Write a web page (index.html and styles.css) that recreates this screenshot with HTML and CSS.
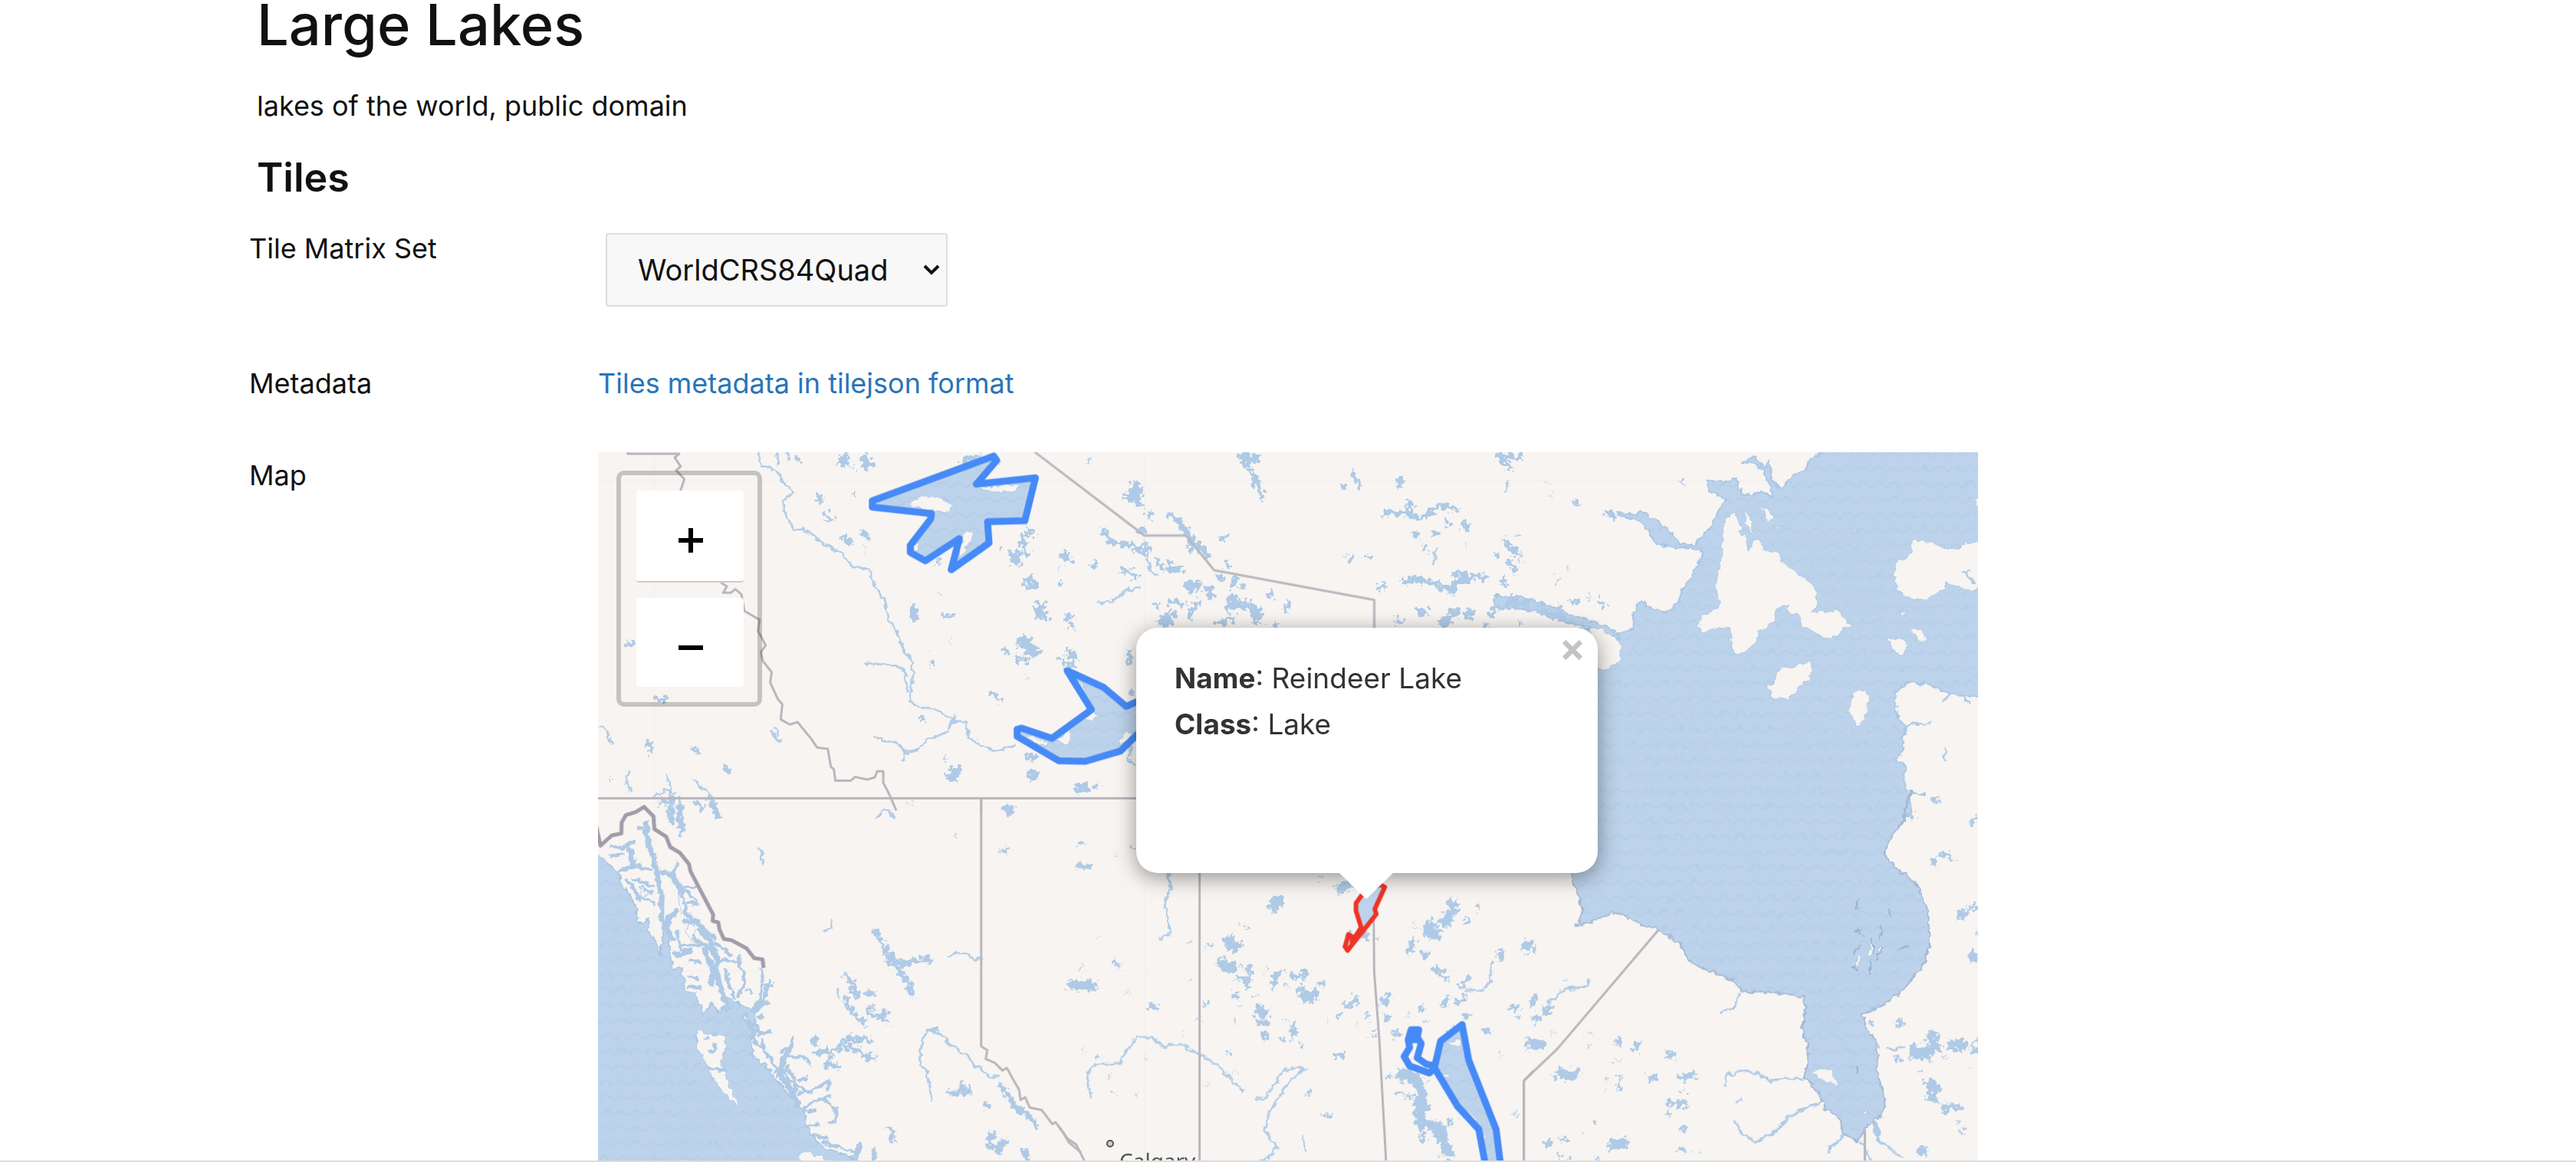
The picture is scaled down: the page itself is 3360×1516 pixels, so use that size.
FILE: index.html
```html
<!DOCTYPE html>
<html lang="en">
<head>
<meta charset="utf-8">
<title>Large Lakes</title>
<link rel="stylesheet" href="styles.css">
</head>
<body>
<main class="page">
  <header class="intro">
    <h1>Large Lakes</h1>
    <p>lakes of the world, public domain</p>
    <h2>Tiles</h2>
  </header>
  <div class="rows">
    <label class="term" for="tms">Tile Matrix Set</label>
    <div class="row-select">
      <div class="select-box">
        <select id="tms"><option>WorldCRS84Quad</option><option>WebMercatorQuad</option></select>
        <svg class="chevron" viewBox="0 0 24 16" aria-hidden="true"><path d="M3 3l9 9 9-9"/></svg>
      </div>
    </div>
    <div class="term">Metadata</div>
    <div class="row-link"><a href="#tilejson">Tiles metadata in tilejson format</a></div>
    <div class="term">Map</div>
    <div class="map">
      <svg class="map-canvas" viewBox="780 590 1800 924" preserveAspectRatio="xMidYMin slice" role="img" aria-label="Map of northern Canada">
        <defs>
          <pattern id="waves" width="20" height="20" patternUnits="userSpaceOnUse" patternTransform="scale(2.529 3)">
            <rect width="20" height="20" fill="#bdd3eb"/>
            <path d="M0 15q3 0 5-3t5-3 5 3 5 3" fill="none" stroke="#b6cee8" stroke-width="2"/>
          </pattern>
          <filter id="rough" filterUnits="userSpaceOnUse" x="770" y="580" width="1820" height="940">
            <feTurbulence type="fractalNoise" baseFrequency=".12" numOctaves="2" seed="4"/>
            <feDisplacementMap in="SourceGraphic" scale="9" xChannelSelector="R" yChannelSelector="G"/>
          </filter>
          <filter id="specks" filterUnits="userSpaceOnUse" x="770" y="580" width="1820" height="940">
            <feTurbulence type="fractalNoise" baseFrequency=".16" numOctaves="2" seed="9"/>
            <feDisplacementMap in="SourceGraphic" scale="18" xChannelSelector="R" yChannelSelector="G"/>
          </filter>
        </defs>
        <rect x="780" y="590" width="1800" height="924" fill="#f7f4f1"/>
        <g class="seams"><path d="M853 590V1514M1493 590V1514M780 627H2580M780 1267H2580"/></g>

        <!-- Hudson Bay and the northern straits -->
        <g filter="url(#rough)">
          <g transform="translate(1980 580) scale(.3954 .3333)">
            <path class="sea" d="M1560-20L1015 20 965 50 950 95 900 130 868 178 835 135 830 60 815 95 775 45 740 70 785 75 815 110 835 170 840 212 800 180 775 200 735 190 720 130 700 145 625 145 630 185 683 215 650 280 645 310 600 370 585 390 535 390 495 330 400 258 385 272 325 268 330 277 400 297 430 335 455 390 540 405 600 410 605 430 590 480 570 520 545 560 530 615 485 660 440 640 405 610 385 650 375 720 335 740 200 720 200 1450H1300L1290 1370 1275 1310 1275 1250 1240 1240 1270 1200 1270 1150 1280 1105 1255 1080 1242 1010 1245 970 1285 930 1340 935 1390 960 1440 975 1480 985 1560 990Z"/>
            <path class="sea" d="M-80 590L0 595 50 608 120 640 180 668 270 700 335 745 335 760 270 730 180 700 60 655 0 642-80 640ZM285 260l20 0 15 30z"/>
            <path class="ground" d="M240 725L270 715 330 765 340 800 335 850 285 885 240 875ZM1560 375L1490 385 1470 385 1460 405 1410 410 1370 385 1300 370 1300 420 1245 465 1242 530 1255 575 1300 605 1340 605 1410 570 1410 540 1500 575 1560 540ZM710 270L685 300 675 340 668 460 652 545 665 640 610 670 592 715 605 742 640 722 700 715 706 815 725 828 760 805 785 770 795 735 845 695 850 640 890 625 895 660 930 665 935 715 1035 760 1095 705 1060 650 1040 640 1040 655 965 655 992 630 975 550 930 510 910 495 870 460 860 430 810 410 785 365 760 415 750 355 725 345 740 330 722 290ZM745 250L770 300 775 345 755 325ZM790 230L845 275 822 305 810 260ZM840 315L875 320 860 325ZM865 865L900 870 950 852 970 860 960 910 910 975 885 998 865 985 845 1000 825 950 850 915ZM1125 960L1145 962 1157 990 1148 1050 1122 1108 1092 1045 1092 1010 1108 975ZM1220 762L1255 758 1283 780 1283 808 1258 828 1240 800ZM1295 722L1330 725 1348 772 1320 760ZM1258 658L1287 655 1268 668ZM1530 200V260L1508 220ZM1500 903L1520 915Z"/>
            <path class="water w3" d="M1490 490l-15 15 20 20 15 20M1400 1002l25-20 15-10M1460 980l35 35M1280 1100l30-10 50 3M1290 1370l50 0M1365 1380l10 20M1410 1190l-2 30 6 20"/>
          </g>
          <g transform="translate(1980 1040) scale(.3954 .3333)">
            <path class="sea coast" d="M170-30L170 270 190 360 212 430 210 460 190 508 240 488 310 452 350 462 400 500 465 518 535 575 565 640 600 665 700 710 740 760 830 762 900 772 943 785 948 830 935 910 955 970 955 1050 942 1095 990 1150 1010 1215 1060 1260 1078 1320 1120 1348 1145 1300 1165 1275 1195 1250 1215 1190 1195 1130 1185 1060 1185 970 1150 900 1135 850 1225 800 1270 755 1330 670 1358 590 1355 480 1335 390 1310 330 1250 280 1212 235 1215 185 1245 135 1270 100 1275 50 1300-30"/>
            <path class="ground" d="M965 1080L1000 1062 1035 1072 1058 1130 1020 1115ZM1165 560l8 20-8 50-8-20zM1125 620l10 5-18 40-5-10zM1190 580l12 20-12 30zM1105 30l6 5-14 15zM1135 1235l20-10-5 20zM1106 1035l5 15-8 5z"/>
            <path class="hair" d="M1120 400v40M1115 510l20 30M1105 610l30-30M1165 550l10 60M1200 590l-20 50M1165 640l-5 55M1120 680l-12-20M1220 430l8 40M1250 600l40-15M1195 500v60M1110 520h30M1115 1050l5 35"/>
            <path class="water w3" d="M735 765l-25 60-45 20M940 1105l-60-5-50 10-40-30-60-10-40 20-8 40M1000 1190l-50 30-60 30-30 50-75 50-40-30-30-50M1075 1325l-30 30-25 35M1190 1290l-5 50 40 30 40 45M1130 1350l35 70M235 710l-5 30-85 15-50 55M1215 988l60-8"/>
            <path class="water w8" d="M1175 1270l15 60"/>
          </g>
        </g>

        <!-- Pacific coast -->
        <g filter="url(#rough)">
          <g transform="translate(780 1040) scale(.3954 .3333)">
            <path class="sea" d="M-30 220L0 230 70 295 75 330 105 380 125 430 130 495 165 480 160 525 190 560 205 620 215 500 235 490 235 600 245 670 275 670 290 760 320 770 350 855 375 800 400 845 430 790 470 810 520 840 515 900 505 960 510 1010 560 1060 620 1150 680 1230 690 1300 740 1370 850 1415 870 1450H-30Z"/>
            <path class="water w8" d="M155 90l10 90 20 60 15 80 10 80 0 90M205 290l40 15 30 70 15 80 50 50 30 60 20 60 5 90 20 60 15 60M100 180l10 60 10 30 30 0M260 440l-40 60 30 60M350 590l30 90-10 60M310 600l-60 20M520 840l30-50M640 970l-30 60-10 60 40 60 20 60M480 850l40 80M860 1360l-10 50"/>
            <path class="water w5" d="M40 190l40 10 40-30M40 230l50-10M130 120l25 10M70 290l60-20 50 20M90 320l30 40 20 50M110 320l30 10 50 20M140 350l40 30M130 380l60 40M245 300l18-45M250 310l30 50 50 50M280 350l50 0M265 330l15 30M290 410l40 10M280 480l60 20 50 60M310 500l10 60 40 20M260 520l10 80M330 520l50 60M270 580h80l40 30M380 570l30 20 30 30M300 640l40 10M350 600l20 60 30 80M380 660l30-20 50 0 20 40 0 60-20 40M460 640l10-20M420 670l10 60 20 60M300 700l30 10M300 740l40 10M540 670l5 80-15 50-20 40M565 710l-10 60-30 70M580 735l-30 0M565 800l-40 30M490 750l20 20M520 870l10 60 40-15M540 850l-10 20M500 930l40 50 40 60 20 50M540 940l10 50M580 1080l60-10M600 1000l40-30 0-30M630 1010l60 15 10 30M600 1040l30 70 30 20M620 1050l30 60 0 60M620 1100l20 60M660 1110l30-10M650 1130l60 30M660 1160l60-20 40-30 5 0M700 1200l60-30M720 1190l50-20M745 1180l40 40 0 50-30 5M690 1230l30 0M690 1290l40-10M710 1320l50 20M740 1350l80 30 40 20M910 1375v50M865 1350l0 50M765 1105l-5 40M680 1230l20-40"/>
            <path class="ground" d="M325 912L370 930 425 935 405 1050 425 1090 430 1130 475 1225 440 1190 385 1110 355 1040 325 970ZM660 1400l40-10 40 20 20 30H680ZM480 860l14-5 2 20zM135 350l30 30-20 10zM270 370l20 60-20 30zM300 490l20 30-10 40-20-30z"/>
            <path class="water w5" d="M350 945l15-5M360 995l25-5 5-25M360 1060l60 10"/>
          </g>
        </g>

        <!-- rivers -->
        <g class="rivers" filter="url(#rough)">
          <g transform="translate(780 580) scale(.3954 .3333)">
            <path d="M525 25l15 55 50 25 30 55 25 25-35 35 5 45 30 65 50 10 50 50 60 35 30 50 60 15 20 70 35 60 5 60 30 50 20 70 30 50 5 70-15 85 35 20 50 10 60 45 45 5 5 55 30 25 60 35 70-25"/>
            <path d="M880 855l60 5 60 15 15 30 5 60M910 1140l40 25 40 0 25 45 40-15 30-40 70-30 10-40 15-25M1020 1210l-15 30"/>
            <path d="M310 1310l50 50 20 40 15 60M225 1290l15 50-5 60M180 1380l40-25 40 10M105 1280l-15 40 20 40M5 1100l25 25 15 50M590 30l5 50M620 30l8 30M270 1380v60M570 1120l30 45M580 1110l15 30"/>
          </g>
          <g transform="translate(1380 580) scale(.3954 .3333)">
            <path d="M130 615l40 5 60-50 40-15M290 400l10 80 30 40M240 1180l-5 60 20 15M1470 190l18-50M1250 400l-12 70"/>
          </g>
          <g transform="translate(780 1040) scale(.3954 .3333)">
            <path d="M920 90l20-40 20 0 20 35M740 525l30-15 5-30M1150 625l30-15 30 5 25 15 35 0M1100 1185l-15-110-25-30 10-100 20-35 40 20 30 35 50 40 40 50 50 45 25-10M790 750l5 35M535 200l8 60"/>
          </g>
          <g transform="translate(1380 1040) scale(.3954 .3333)">
            <path d="M365 295l5 60-20 70 10 50 10 60-40 25M110 1180l-15-100 30-35 75-5 60-100 50 0 30 35 60-10 80 50 50 40 50 60 30 35M650 1180l35 0 30-60 30-55 75-5-50 45-30 50-40 70-20 80 45 65-40 50-70 15M1435 640l-10 80-20 35-60 0M805 1320l15 65"/>
          </g>
        </g>

        <!-- small lakes -->
        <g filter="url(#specks)">
          <g transform="translate(780 580) scale(.3954 .3333)">
            <path class="water w14" d="M810 40l5 45M875 45l25 45M1370 410l10 60M1380 420l-5 50M1415 520l20 50M1455 620l8 60M1470 660l5 20M1390 770l30 20 30 30M1400 750l30 60M1175 1260l5 30-20 20M1420 1290l30 0M1150 660v20M1530 450l20-20"/>
            <path class="water w8" d="M735 200l-5 30M745 260l25 40M840 185l10 0M800 355l40 35M870 335l20 35M878 412h3M1045 625l-10 50 15 10M1125 583h3M1160 770h3M1090 810h3M1100 845l3 25M1410 330l-10 60 20 50M1440 335l-20 20M1330 805l20 0M1380 820l10 30M1410 840v15M1410 915h3M1300 970l30 35M1028 1035h3M1068 1065v20M1145 1223h3M1410 1215l40 15M165 1150l15 60M320 1180l5 35M425 1260l3 25M40 1305h3M190 1000l40-5M95 778l25 5M660 45v20M735 37h2M840 90v3M1520 490h3M1525 550h5M1550 670l3 20M1560 710v10M1530 845l20 30M1325 405l3 5M1110 465l20-5M910 210v20M1200 75l70-30M1330 65h5"/>
          </g>
          <g transform="translate(1380 580) scale(.3954 .3333)">
            <path class="water w14" d="M610 30l20 50M640 40l20 20M255 145l5 90M225 190l30 20M370 670l-30 40M570 590l20 60M650 640l10 60M1480 610l80 20M1260 700l40-20M1300 640l5 30M1200 640l5 30M1340 660l30 10M100 1340l-40 10M420 560l50-10"/>
            <path class="water w8" d="M630 90l30 70 15 50M970 105l25 60M943 150v20M1128 130v40M1450 30l45 70M1460 45l70 5M95 65h15M300 260v30M365 265l50 60 30 50 50 60M430 340l10 80M150 330l20 50 60 10 60 30M260 340l30-10M290 380v60M210 490l50 20-10 25M40 440v20M130 455l-20 20M330 450l20 50M370 450v40l40 0M530 370l30-10M550 460l15 5M600 550l20 10M490 570l20 30M480 560l30 10M550 640l80-10 30 10M520 700l60-20M430 690l20-60 20-20M360 610l60 20M310 628h25M700 575v30M760 615l-10 45M720 700v15M590 520l-20 40M530 500l10 30M950 430v3M960 455l15-5M1018 430v20M1070 265l80 5 40 20 60-40 30-15 40 30M1160 220v50M1280 290l5 30M1340 295l5 50M1240 330v30M1180 340v30M1210 390v30M1345 390h2M1383 420h2M1130 540l50-15 60 20 40 20 50-30 60-20 20 5M1280 570l40 0M1300 510l90 10M1050 565l30-15M1480 370v30l40 30M1450 420l-5 25M1490 440v30l20 30M1470 510v40M1515 350h3M1430 640l5 40M1110 690l30 0M1520 700h3M1400 710l25 0M10 830l15 40M30 800l25 40-15 30M240 800l-8 60M240 960v20M120 1330l15 15M30 660l15 20M40 700v15M0 550h8M380 650l-10 50M600 610l30 0"/>
          </g>
          <g transform="translate(1980 580) scale(.3954 .3333)">
            <path class="water w8" d="M5 45h3M98 145v3M112 200h3M192 220v15M540 140l4 20M165 490h5M130 530h5M230 597h5M260 605l25 30M175 620l20-5M0 350v5M5 430h5M0 455h8M5 700h5M60 640l90 40M130 630l20 50M290 265l25 20"/>
          </g>
          <g transform="translate(780 1040) scale(.3954 .3333)">
            <path class="water w8" d="M1330 45l40 15M1350 30l10 25M1180 158h4M1330 215l20-10M1028 25v3M370 0l28 85M320 20l28 20M200 20l60-10M240 20v80M270 30v60l10 20-10 40M910 515l40 80 30 50 40 80 20 50M945 635l70 15 50-15 40 5M815 695l30 50 10 40M810 780l30 60 30 40 20-5M885 768h35M880 830l30-10M890 850l40 5 25 30M940 840l15 10M800 950l50-5 50 5M725 940l-20 30M715 1000l60-5 30-25 50 20 40 35 20-10M770 1020l-20 30 50 5M1155 1155l30 5 50-10M1190 1150l20-25M1285 1195v25M1325 1120l50 90 40 30 35 50M965 1290l8 60M1305 1310l-20 50 30 20 20-10 0-30M1340 1340l-20 60M1400 1375l20 45M1550 733l15 0M1100 912l20 0"/>
          </g>
          <g transform="translate(1380 1040) scale(.3954 .3333)">
            <path class="water w14" d="M700 410l40 0M700 440l30-30M930 340l10 30M40 735l70 0M110 735l10 15M560 540l10 40 30 10M530 640l40 30 20-20M800 780l60-10M830 770v30M650 830l40 20M1300 400l5 60M1240 480l-20 50 40 10M1270 500l30-40M1120 1080l60 20 20 60-10 60 10 60 50 10 20 60 20 60M1450 620l20 0M1530 580l40 10M1555 960h10M1130 1090l60 20M1260 1290l15 50"/>
            <path class="water w8" d="M70 175l15 5M190 225h3M245 190v10M60 268l50 5M130 550v3M185 640l15 20M75 665h5M228 763h3M300 815l30 10M430 565l3 5M495 570v15M465 600v3M430 720v5M480 810h10M463 865h3M418 925v3M595 495h3M620 510l10 5M630 660l-5 90M590 710l30 0M590 770l-10 15M655 775v10M600 815h3M580 875h5M655 880l45 10M680 915l10 45M780 880l-5 60M755 875v3M740 940v10M800 965l10 10M685 670h5M740 685l-25 10-5 50M770 700h40M820 680l-20 30M865 720v15M755 740v5M800 740v50M890 880h3M925 845v15M985 770l-10 40-30 10M985 893h3M940 800v10M1090 770v20l-30 20M1025 850v20M1070 860l30 10M1155 850v3M1200 820v25M1210 875v5M1020 940v3M1045 910v15M1120 910v20l-20 10M1380 435h8M1345 480v20M1170 500v5M1170 550l-10 60M1210 600v30M1240 660l20 30 30 20M1290 780l-20 40M1360 700l-30 40M1350 790l-40 15M1340 860l20-15M1490 830l30-15M1400 915l30 0M1515 860h5M1560 810h10M1455 1012h5M940 1005l-30 15M885 1245l20 0M870 1240v10M828 1150v15M565 990v20M580 1080h3M487 1125h3M285 1025h3M180 1150v10M258 1163h3M175 1085h3M80 995h3M130 1012h10M1130 1150v20M1160 1160v20M1220 1110v3M1215 1200v30M1195 1310l15 35M1300 1260l-10 25M1512 1240v5M1050 550v10M965 520v20M1025 520l-20 30M1290 910h20M870 310v10M960 320v40M1080 1095h15M1320 930l10 40"/>
          </g>
          <g transform="translate(1980 1040) scale(.3954 .3333)">
            <path class="water w14" d="M20 580l15 5M80 835l30 0M30 965l60 10M130 1070l20 20 50-5M380 975l20 5M330 1120h10M300 1360l60-10M1290 990l60 0 40-20M1370 920l-10 40M1420 970l60 0M1350 1110l30 30-20 50M1400 1215l20 0M1450 465l30-10M1490 610l20 20M1500 85l10 10M1320 1385l30 0M1300 1010l60-5M1560 950l-50 20"/>
            <path class="water w8" d="M155 710v8M60 780l-20 30M0 810v15M0 860v5M50 880l20-25M115 920v3M230 922v3M238 970v5M330 940v30M325 1030v5M485 1008h35M290 1108h5M278 1148h3M430 1100l30-5M520 1100l60-5M545 1090v20M575 1075v35M540 1150h5M490 1205l50-10 20 10M490 1235h10M260 1270l-10 10M215 1312v3M85 1358l30-5M140 1340h20M130 1400h8M540 1295l15 8M540 1370v15M590 1388v3M732 1180v10M1160 885h15M1245 882h30M1380 0v15M1285 75h25M1390 220l30 10 15 10M1370 240l10 30M1510 420l-30 30M1515 530v8M1245 1025h15M1410 1020h5M1355 1030v5M1330 1065v10M1485 1060v3M1420 1215l45-5M1450 1265v10M1460 1300l10 20M1490 995h30M1540 990h-40M165 1418h10M255 1418h8"/>
          </g>
        </g>

        <!-- province and country borders -->
        <g class="borders">
          <g transform="translate(780 580) scale(.3954 .3333)">
            <path d="M98 30v6h170l-15 15 20 35-15 15 27 35-13 45M405 540l20 15-12 25 25 0 15-14 20 20 10 65 50 35-5 45 10 20 15 35-15 25 5 35 30 45-5 40 25 65 15 20-5 60 30 20 25-10 45 65 20 35 35 5 10 70 10 10 5 45 50 0 15-15 40 10 25-8 8-24h20l0 45 20 45 23 63M0 1385H1800M1264 1385v60"/>
          </g>
          <g transform="translate(1380 580) scale(.3954 .3333)">
            <path d="M-78 28L285 356H422L515 492 1043 608V800"/>
          </g>
          <g transform="translate(780 1040) scale(.3954 .3333)">
            <path d="M1264 5V975l20 15-5 35 30 15 25 30 15-10 20 45 20 40 5 40 15-10 15 40 40 10 35 55 10-8 25 40 20 40 40 40"/>
            <path class="thick" d="M-10 90L8 190 45 150 77 142 78 100 92 70 125 58 152 38 183 75 186 125 225 155 238 195 270 218 300 262 305 290 380 460 378 485 397 490 400 515 415 555 440 560 490 592 515 630 543 635 546 668"/>
          </g>
          <g transform="translate(1380 1040) scale(.3954 .3333)">
            <path d="M467 290V1422M1040 290L1043 683 1060 950 1082 1422M0 1285l30 50 30 25 30 70M1537 1430V1110L1570 1070"/>
          </g>
          <g transform="translate(1980 1040) scale(.3954 .3333)">
            <path d="M19 1430V1110L130 985 463 520M1144 1300V1430"/>
          </g>
        </g>

        <!-- lakes of the dataset -->
        <g transform="translate(780 580) scale(.3954 .3333)">
          <path class="lake-water" d="M1305 45L905 220V245L1100 270 1097 292 1030 395V422L1080 455 1192 368 1165 490 1290 385 1285 302 1408 298 1443 130 1248 155 1315 62Z"/>
        </g>
        <g transform="translate(1380 580) scale(.3954 .3333)">
          <path class="lake-water" d="M30 885L150 950 225 1025 300 985V1090L205 1200 90 1240 3 1238-135 1142V1115L-120 1110-20 1150 110 1038Z"/>
        </g>
        <g transform="translate(1380 1040) scale(.3954 .3333)">
          <path class="lake-water" d="M1333 890L1355 1030 1445 1300 1460 1440H1410L1388 1300 1318 1210 1242 1060 1262 955Z"/>
        </g>
        <g filter="url(#rough)">
          <g transform="translate(780 580) scale(.3954 .3333)">
            <path class="ground" d="M925 238L1030 235 1050 205 1110 203 1140 212 1172 240 1155 265 1090 255 1040 240ZM1240 165L1390 155 1380 182 1320 186ZM1200 350L1215 337 1238 350 1225 390 1195 440 1185 440 1200 380ZM1042 400l15-20 5 20-15 18z"/>
          </g>
          <g transform="translate(1380 580) scale(.3954 .3333)">
            <path class="ground" d="M115 1045l15 20-20 15-25-10zM40 1110l5 45-20 15-30-10zM255 1130l-35 0-20 30 5 20zM-100 1135l70 35-10 10-50-20zM60 920l30 30-5 20z"/>
          </g>
          <g transform="translate(1380 1040) scale(.3954 .3333)">
            <path class="ground" d="M1275 965l45-20 10 30-20-5zM1258 1085l40 0-20 15zM1345 1210l35 50-5 15zM1400 1310l10 20-5 50z"/>
          </g>
        </g>
        <g transform="translate(780 580) scale(.3954 .3333)">
          <path class="lake" d="M1305 45L905 220V245L1100 270 1097 292 1030 395V422L1080 455 1192 368 1165 490 1290 385 1285 302 1408 298 1443 130 1248 155 1315 62Z"/>
        </g>
        <g transform="translate(1380 580) scale(.3954 .3333)">
          <path class="lake" d="M30 885L150 950 225 1025 300 985V1090L205 1200 90 1240 3 1238-135 1142V1115L-120 1110-20 1150 110 1038Z"/>
        </g>
        <g transform="translate(1380 1040) scale(.3954 .3333)">
          <path class="lake" d="M1333 890L1355 1030 1445 1300 1460 1440H1410L1388 1300 1318 1210 1242 1060 1225 1080 1160 1052 1142 1015 1160 980 1155 950 1165 910H1190L1185 940 1198 965 1185 1020 1215 1045 1243 1052 1262 955Z"/>
          <path class="lake-solid" d="M1163 908h28l5 55-30 0z"/>
          <path class="lake selected" d="M1062 342L1078 352 1045 438 1050 458 955 600 947 585 958 537 970 545 970 565 1000 510 983 445V415L1010 370Z"/>
        </g>

        <circle cx="1448" cy="1492" r="4" fill="#d0ced0" stroke="#555" stroke-width="2"/>
        <text class="city" x="1460" y="1525">Calgary</text>
      </svg>

      <div class="zoom">
        <button type="button" aria-label="Zoom in" class="zoom-in"><svg viewBox="0 0 32 32"><path d="M16 0v32M0 16h32"/></svg></button>
        <button type="button" aria-label="Zoom out"><svg viewBox="0 0 32 32"><path d="M0 16h32"/></svg></button>
      </div>

      <div class="popup">
        <div><b>Name</b>: Reindeer Lake</div>
        <div><b>Class</b>: Lake</div>
        <button type="button" class="close" aria-label="Close popup"><svg viewBox="0 0 24 24"><path d="M2 2l20 20M22 2L2 22"/></svg></button>
      </div>
    </div>
  </div>
</main>
</body>
</html>
```
FILE: styles.css
```css
* { box-sizing: border-box; }
body {
  margin: 0;
  background: #fff;
  color: #111;
  font-family: Inter, "Liberation Sans", sans-serif;
  font-size: 36px;
  line-height: 60px;
}
.page { border-bottom: 2px solid #ddd; }
.intro, .rows {
  max-width: 2710px;
  margin: 0 auto;
}
.intro { padding: 0 10px; }
h1, h2, p { margin: 0; }
h1 { font-size: 74px; font-weight: 500; line-height: 64px; }
p { margin-top: 44px; }
h2 { margin-top: 32px; font-size: 52px; font-weight: 600; line-height: 64px; }
.rows {
  display: grid;
  grid-template-columns: 455px minmax(0, 1800px);
  padding-top: 30px;
}
.row-select { height: 176px; padding: 10px; }
.row-link { height: 120px; }
a { color: #2a74b8; text-decoration: none; }

.select-box { display: inline-grid; }
.select-box > * { grid-area: 1 / 1; }
select {
  width: 446px;
  height: 96px;
  padding: 0 40px;
  appearance: none;
  border: 2px solid #ddd;
  border-radius: 4px;
  background: #f8f8f8;
  color: #111;
  font: inherit;
  font-size: 38px;
}
.chevron {
  width: 24px;
  height: 16px;
  margin-right: 9px;
  align-self: center;
  justify-self: end;
  pointer-events: none;
  fill: none;
  stroke: #111;
  stroke-width: 4;
}

.map {
  position: relative;
  aspect-ratio: 1800 / 924;
  overflow: hidden;
}
.map-canvas { display: block; width: 100%; height: 100%; }
.map-canvas g path { vector-effect: non-scaling-stroke; stroke-linejoin: round; }
.seams path { fill: none; stroke: #f1efed; }
.sea { fill: url(#waves); stroke: #a9c6e5; stroke-width: 2; }
.sea.coast { stroke: #a3b6d3; }
.ground { fill: #f7f4f1; stroke: #b0cae6; stroke-width: 1; }
.water { fill: none; stroke: #afcae6; }
.w3 { stroke-width: 3; }
.w5 { stroke-width: 4; }
.w8 { stroke-width: 7; }
.w14 { stroke-width: 14; }
.hair { fill: none; stroke: #98afd0; stroke-width: 2; }
.rivers path { fill: none; stroke: #b3cde7; stroke-width: 3; }
.borders path { fill: none; stroke: #bab6bf; stroke-width: 3; }
.borders .thick { stroke: #a09ca9; stroke-width: 5; }
.lake-water { fill: url(#waves); }
.lake { fill: none; stroke: #468af7; stroke-width: 9; }
.lake-solid { fill: #468af7; }
.lake.selected { fill: #bdd3eb; stroke: #ef3326; stroke-width: 6; }
.city { font: 28px "Noto Sans", sans-serif; fill: #555; }

.zoom {
  position: absolute;
  top: 24px;
  left: 24px;
  display: grid;
  gap: 20px;
  padding: 20px 18px 20px 20px;
  border: 6px solid rgba(0, 0, 0, .2);
  border-radius: 10px;
}
.zoom button {
  display: grid;
  place-items: center;
  width: 140px;
  height: 116px;
  padding: 14px 0 0 2px;
  border: 0;
  border-radius: 4px;
  background: #fff;
}
.zoom .zoom-in { height: 120px; padding-top: 12px; border-bottom: 2px solid #ccc; }
.zoom svg { width: 32px; height: 32px; stroke: #000; stroke-width: 6; }

.popup {
  position: absolute;
  top: 229px;
  left: 702px;
  width: 602px;
  height: 320px;
  padding: 36px 50px;
  border-radius: 28px;
  background: #fff;
  color: #333;
  font-size: 37px;
  box-shadow: 0 6px 28px rgba(0, 0, 0, .4);
}
.popup::after {
  content: "";
  position: absolute;
  top: 100%;
  left: 50%;
  width: 70px;
  height: 34px;
  margin-left: -36px;
  background: #fff;
  clip-path: polygon(0 0, 100% 0, 50% 100%);
}
.close {
  position: absolute;
  top: 16px;
  right: 20px;
  width: 26px;
  height: 26px;
  padding: 0;
  border: 0;
  background: none;
}
.close svg { display: block; stroke: #c3c3c3; stroke-width: 6; }
```
